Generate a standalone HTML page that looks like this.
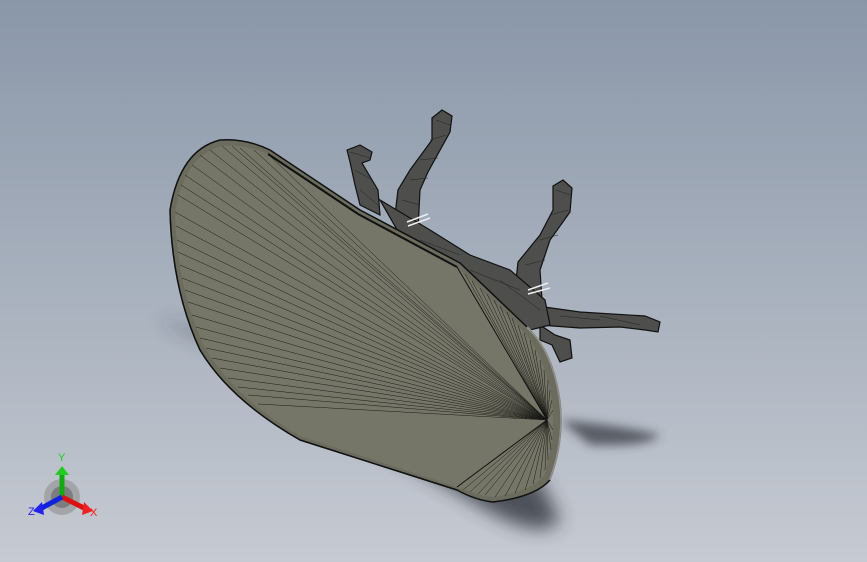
<!DOCTYPE html>
<html><head><style>
html,body{margin:0;padding:0;}
body{width:867px;height:562px;overflow:hidden;background:linear-gradient(180deg,#8a97a9 0%,#a7b0bd 50%,#c6cad2 100%);}
svg{position:absolute;left:0;top:0;}
</style></head><body>
<svg width="867" height="562" viewBox="0 0 867 562" xmlns="http://www.w3.org/2000/svg">
<defs>
<filter id="b" x="-50%" y="-50%" width="200%" height="200%"><feGaussianBlur stdDeviation="9"/></filter>
<filter id="b2" x="-50%" y="-50%" width="200%" height="200%"><feGaussianBlur stdDeviation="5"/></filter>
</defs>
<path d="M160 320 Q200 325 300 400 L470 500 Q540 545 560 520 L540 480 L300 385 Z" fill="#30343c" opacity="0.8" filter="url(#b)"/>
<path d="M560 420 Q620 425 660 435 Q650 447 590 445 Z" fill="#30343c" opacity="0.7" filter="url(#b2)"/>
<g fill="#4e4e4c" stroke="#111" stroke-width="1.2">
<path d="M347 150 L360 145 L372 152 L370 160 L362 163 L378 190 L380 215 L360 205 L355 185 L350 162 Z"/>
<path d="M432 118 L442 110 L452 116 L450 132 L428 172 L420 190 L418 230 L395 215 L398 190 L410 170 L432 140 Z"/>
<path d="M553 186 L563 180 L572 188 L570 212 L550 240 L540 270 L542 300 L515 290 L518 262 L540 235 L553 210 Z"/>
<path d="M530 305 L580 312 L645 316 L660 322 L658 332 L645 330 L620 327 L580 328 L540 325 Z"/>
<path d="M540 325 L555 335 L570 340 L572 358 L560 362 L552 345 L540 340 Z"/>
<path d="M380 200 L430 230 L470 255 L510 270 L545 300 L550 325 L530 330 L470 285 L400 235 Z"/>
</g>
<g stroke="#222" stroke-width="0.5" fill="none">
<path d="M350 152L370 158M355 170L372 180M360 190L378 205M436 120L450 125M430 140L446 135M420 160L438 158M410 180L428 178M402 200L420 205M556 190L570 195M550 215L568 210M540 240L558 235M525 265L545 260M560 316L600 320M600 316L640 325M420 240L460 255M470 270L520 290M500 280L540 310"/>
</g>
<g stroke="#eee" stroke-width="1.5">
<line x1="407" y1="222" x2="428" y2="214"/><line x1="408" y1="226" x2="430" y2="218"/>
<line x1="528" y1="290" x2="548" y2="283"/><line x1="528" y1="294" x2="550" y2="288"/>
</g>
<path d="M220 140 Q180 150 170 210 Q172 290 200 350 Q230 400 300 440 L457 490 Q475 500 493 502 Q535 497 550 480 Q565 440 560 400 Q553 350 527 327 L460 263 L360 210 L270 150 Q245 138 220 140 Z" fill="#6b6b5e" stroke="#111" stroke-width="1.5"/>
<path d="M222 146 Q185 155 175 212 Q177 290 205 348 Q235 398 300 436 L457 487 Q478 496 493 497 Q530 492 544 476 Q556 440 552 400 Q545 355 522 330 L457 267 L358 214 L268 154 Q245 144 222 146 Z" fill="#767668"/>
<g stroke="#1a1a16" stroke-width="0.5" fill="none">
<path d="M547 420L175 212M547 420L176 226M547 420L177 240M547 420L178 252M547 420L180 265M547 420L182 278M547 420L185 290M547 420L188 302M547 420L192 315M547 420L196 327M547 420L200 338M547 420L206 348M547 420L212 358M547 420L220 368M547 420L228 378M547 420L238 387M547 420L248 395M547 420L258 404M547 420L222 146M547 420L210 150M547 420L200 155M547 420L192 165M547 420L185 175M547 420L181 185M547 420L178 195M547 420L232 146M547 420L240 148M547 420L254 150M547 420L268 154"/>
<path d="M547 420L457 267M547 420L465 274M547 420L472 281M547 420L480 288M547 420L487 294M547 420L494 300M547 420L500 306M547 420L507 312M547 420L512 318M547 420L518 325M547 420L524 333M547 420L530 340M547 420L535 350M547 420L540 360M547 420L544 370M547 420L548 380M547 420L550 390M547 420L552 400M547 420L553 410M547 420L553 430M547 420L552 440M547 420L551 450M547 420L548 460M547 420L545 470M547 420L540 478M547 420L533 484M547 420L525 490M547 420L515 493M547 420L505 496M547 420L495 497M547 420L485 495M547 420L478 494M547 420L470 492M547 420L463 490"/>
</g>
<path d="M457 267 L547 420 L457 487" fill="none" stroke="#111" stroke-width="1"/>
<path d="M268 154 L358 214 L457 267" fill="none" stroke="#111" stroke-width="2"/>
<path d="M527 327 Q553 350 560 400 Q565 440 550 480" fill="none" stroke="#ddd" stroke-width="2" opacity="0.6"/>
<path d="M170 210 Q172 290 200 350 Q230 400 300 440 L457 490" fill="none" stroke="#111" stroke-width="1.2"/>
<circle cx="62" cy="497" r="18" fill="#8a8a8a" opacity="0.55"/>
<circle cx="62" cy="497" r="11" fill="#555" opacity="0.5"/>
<line x1="62" y1="497" x2="62" y2="472" stroke="#1a1" stroke-width="5"/>
<path d="M55 475 L62 466 L69 475 Z" fill="#2c2"/>
<line x1="62" y1="497" x2="86" y2="509" stroke="#d11" stroke-width="5"/>
<path d="M84 502 L93 511 L82 515 Z" fill="#e22"/>
<line x1="62" y1="497" x2="40" y2="509" stroke="#12d" stroke-width="5"/>
<path d="M42 502 L33 511 L44 515 Z" fill="#22e"/>
<text x="58" y="461" font-family="Liberation Sans,sans-serif" font-size="11" fill="#2c2">Y</text>
<text x="90" y="516" font-family="Liberation Sans,sans-serif" font-size="11" fill="#e22">X</text>
<text x="28" y="515" font-family="Liberation Sans,sans-serif" font-size="11" fill="#22e">Z</text>
</svg>
</body></html>
